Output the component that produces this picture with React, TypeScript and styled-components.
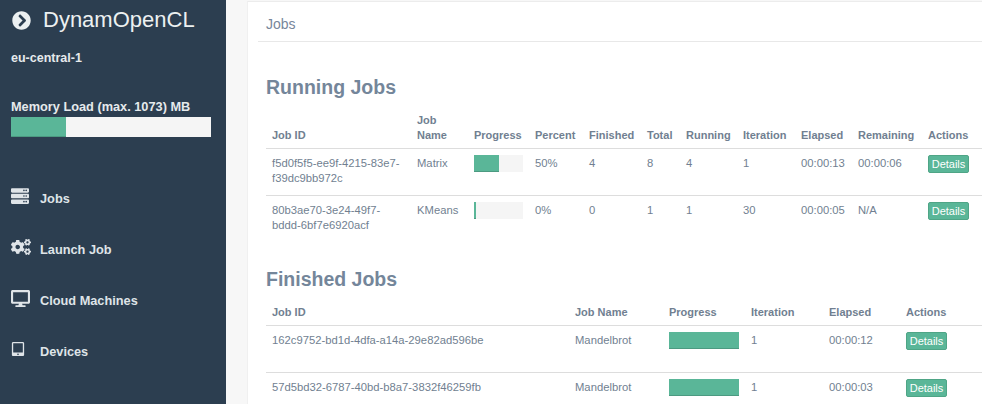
import styled, { createGlobalStyle } from 'styled-components';
import { FaChevronCircleRight, FaServer, FaCogs, FaDesktop, FaTabletAlt } from 'react-icons/fa';

const GlobalStyle = createGlobalStyle`
  html, body {
    margin: 0;
    height: 100%;
    overflow: hidden;
    background: #f7f7f7;
    font-family: "Liberation Sans", Arial, sans-serif;
    -webkit-font-smoothing: antialiased;
  }
`;

const Page = styled.div`
  display: flex;
  width: 982px;
  height: 404px;
  overflow: hidden;
`;

const Sidebar = styled.aside`
  flex: 0 0 226px;
  box-sizing: border-box;
  background: #2c3e50;
  color: #ecf0f1;
  padding: 6px 15px 0 11px;
`;

const Brand = styled.div`
  display: flex;
  align-items: center;
  gap: 12px;
  height: 28px;
  padding-left: 1px;
  font-size: 22px;
  svg {
    font-size: 19px;
    flex: none;
  }
`;

const Region = styled.div`
  margin-top: 17px;
  font-size: 12.5px;
  font-weight: bold;
  line-height: 14px;
  color: #e6eaec;
`;

const MemoryLabel = styled.div`
  margin-top: 35px;
  font-size: 12.75px;
  font-weight: bold;
  line-height: 14px;
  color: #e6eaec;
`;

const MemoryBar = styled.div`
  height: 20px;
  margin-top: 3px;
  background: #f5f5f5;
`;

const Nav = styled.nav`
  display: flex;
  flex-direction: column;
  gap: 33px;
  margin-top: 52px;
`;

const NavItem = styled.a`
  display: flex;
  align-items: center;
  height: 18px;
  font-size: 12.75px;
  font-weight: bold;
  color: #dfe4e8;
`;

const NavIcon = styled.span`
  display: flex;
  flex: 0 0 29px;
  align-items: center;
  margin-top: -4px;
`;

const Content = styled.main`
  flex: 1;
  min-width: 0;
  box-sizing: border-box;
  margin: 1px 0 0 21px;
  padding: 0 0 0 14px;
  background: #fff;
  border-top: 1px solid #ececec;
  border-left: 1px solid #f0f0f0;
`;

const Breadcrumb = styled.div`
  height: 39px;
  line-height: 45px;
  border-bottom: 1px solid #e8e8e8;
  margin-left: -4px;
  padding-left: 8px;
  font-size: 14px;
  color: #77869a;
`;

const SectionTitle = styled.h2<{ $top: number }>`
  margin: ${(p) => p.$top}px 0 0 4px;
  font-size: 19.5px;
  line-height: 24px;
  font-weight: bold;
  color: #74869a;
`;

const Table = styled.table<{ $top: number }>`
  width: 716px;
  margin: ${(p) => p.$top}px 0 0 4px;
  border-collapse: collapse;
  table-layout: fixed;
  font-size: 11px;
  line-height: 15px;
  color: #717f91;
`;

const Col = styled.col<{ $w: number }>`
  width: ${(p) => p.$w}px;
`;

const Th = styled.th`
  padding: 0 6px 5px;
  text-align: left;
  vertical-align: bottom;
  font-weight: bold;
  border-bottom: 1px solid #dddddd;
`;

const Td = styled.td`
  height: 47px;
  box-sizing: border-box;
  padding: 7px 6px 0;
  vertical-align: top;
  font-size: 11.25px;
  border-bottom: 1px solid #dddddd;
`;

const LastTd = styled(Td)`
  border-bottom: none;
`;

const Track = styled.div<{ $w: number }>`
  width: ${(p) => p.$w}px;
  height: 17px;
  margin-top: -1px;
  background: #f5f5f5;
`;

const Fill = styled.div`
  height: 100%;
  background: #5ab698;
  box-shadow: inset 0 -1px 0 rgba(0, 0, 0, 0.15);
`;

const Details = styled.button`
  display: block;
  height: 18px;
  width: 41px;
  margin-top: -1px;
  padding: 0;
  border: 1px solid #4fa586;
  border-radius: 2px;
  background: #5ab698;
  color: #fff;
  font: 11px "Liberation Sans", Arial, sans-serif;
`;

type RunningJob = {
  id: string;
  name: string;
  percent: number;
  finished: number;
  total: number;
  running: number;
  iteration: number;
  elapsed: string;
  remaining: string;
};

const runningJobs: RunningJob[] = [
  { id: 'f5d0f5f5-ee9f-4215-83e7-f39dc9bb972c', name: 'Matrix', percent: 50, finished: 4, total: 8, running: 4, iteration: 1, elapsed: '00:00:13', remaining: '00:00:06' },
  { id: '80b3ae70-3e24-49f7-bddd-6bf7e6920acf', name: 'KMeans', percent: 0, finished: 0, total: 1, running: 1, iteration: 30, elapsed: '00:00:05', remaining: 'N/A' },
];

const finishedJobs = [
  { id: '162c9752-bd1d-4dfa-a14a-29e82ad596be', name: 'Mandelbrot', iteration: 1, elapsed: '00:00:12' },
  { id: '57d5bd32-6787-40bd-b8a7-3832f46259fb', name: 'Mandelbrot', iteration: 1, elapsed: '00:00:03' },
];

const runningCols = [145, 57, 61, 54, 58, 39, 57, 58, 57, 70, 60];
const finishedCols = [303, 94, 82, 78, 77, 82];

export default function App() {
  return (
    <Page>
      <GlobalStyle />
      <Sidebar>
        <Brand>
          <FaChevronCircleRight />
          DynamOpenCL
        </Brand>
        <Region>eu-central-1</Region>
        <MemoryLabel>Memory Load (max. 1073) MB</MemoryLabel>
        <MemoryBar>
          <Fill style={{ width: '27.5%' }} />
        </MemoryBar>
        <Nav>
          <NavItem>
            <NavIcon><FaServer size={18} /></NavIcon>
            Jobs
          </NavItem>
          <NavItem>
            <NavIcon><FaCogs size={20} /></NavIcon>
            Launch Job
          </NavItem>
          <NavItem>
            <NavIcon><FaDesktop size={19} /></NavIcon>
            Cloud Machines
          </NavItem>
          <NavItem>
            <NavIcon><FaTabletAlt size={14} /></NavIcon>
            Devices
          </NavItem>
        </Nav>
      </Sidebar>
      <Content>
        <Breadcrumb>Jobs</Breadcrumb>
        <SectionTitle $top={33}>Running Jobs</SectionTitle>
        <Table $top={14}>
          <colgroup>
            {runningCols.map((w, i) => <Col key={i} $w={w} />)}
          </colgroup>
          <thead>
            <tr>
              <Th>Job ID</Th>
              <Th>Job Name</Th>
              <Th>Progress</Th>
              <Th>Percent</Th>
              <Th>Finished</Th>
              <Th>Total</Th>
              <Th>Running</Th>
              <Th>Iteration</Th>
              <Th>Elapsed</Th>
              <Th>Remaining</Th>
              <Th>Actions</Th>
            </tr>
          </thead>
          <tbody>
            {runningJobs.map((job, i) => {
              const Cell = i === runningJobs.length - 1 ? LastTd : Td;
              return (
                <tr key={job.id}>
                  <Cell>{job.id}</Cell>
                  <Cell>{job.name}</Cell>
                  <Cell>
                    <Track $w={49}>
                      <Fill style={{ width: `${Math.max(job.percent, 4)}%` }} />
                    </Track>
                  </Cell>
                  <Cell>{job.percent}%</Cell>
                  <Cell>{job.finished}</Cell>
                  <Cell>{job.total}</Cell>
                  <Cell>{job.running}</Cell>
                  <Cell>{job.iteration}</Cell>
                  <Cell>{job.elapsed}</Cell>
                  <Cell>{job.remaining}</Cell>
                  <Cell><Details>Details</Details></Cell>
                </tr>
              );
            })}
          </tbody>
        </Table>
        <SectionTitle $top={24}>Finished Jobs</SectionTitle>
        <Table $top={14}>
          <colgroup>
            {finishedCols.map((w, i) => <Col key={i} $w={w} />)}
          </colgroup>
          <thead>
            <tr>
              <Th>Job ID</Th>
              <Th>Job Name</Th>
              <Th>Progress</Th>
              <Th>Iteration</Th>
              <Th>Elapsed</Th>
              <Th>Actions</Th>
            </tr>
          </thead>
          <tbody>
            {finishedJobs.map((job) => (
              <tr key={job.id}>
                <Td>{job.id}</Td>
                <Td>{job.name}</Td>
                <Td>
                  <Track $w={70}>
                    <Fill />
                  </Track>
                </Td>
                <Td>{job.iteration}</Td>
                <Td>{job.elapsed}</Td>
                <Td><Details>Details</Details></Td>
              </tr>
            ))}
          </tbody>
        </Table>
      </Content>
    </Page>
  );
}
